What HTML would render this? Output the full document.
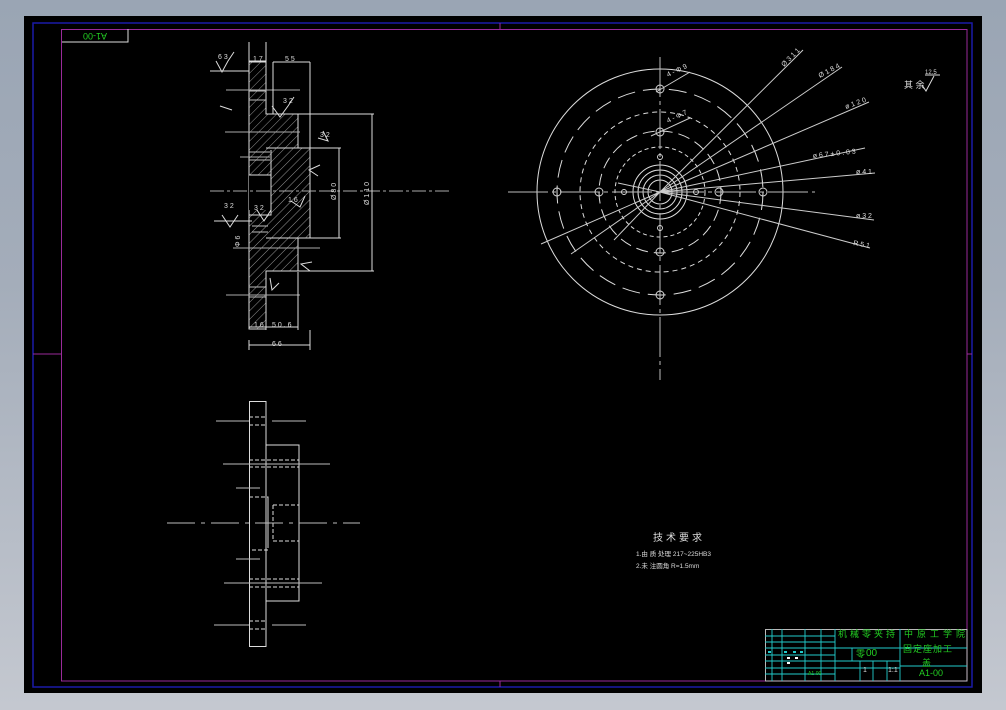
<!DOCTYPE html>
<html><head><meta charset="utf-8"><style>
html,body{margin:0;padding:0;width:1006px;height:710px;overflow:hidden;background:linear-gradient(#9aa5b4 0,#a4adba 40%,#c4c8d0 100%);}
svg{position:absolute;left:0;top:0}
text{font-family:"Liberation Sans","Noto Sans CJK SC",sans-serif}
</style></head><body>
<svg width="1006" height="710" viewBox="0 0 1006 710">
<defs>
<pattern id="h" width="6" height="6" patternUnits="userSpaceOnUse" patternTransform="rotate(45)">
<line x1="0" y1="0" x2="0" y2="6" stroke="#bbb" stroke-width="0.8"/></pattern>
</defs>
<rect x="24" y="16" width="958" height="677" fill="#000"/>
<rect x="33" y="23" width="939" height="664" fill="none" stroke="#1a1aa8" stroke-width="1.5"/>
<rect x="61.5" y="29.5" width="905.5" height="651.5" fill="none" stroke="#9a2a9a" stroke-width="1"/>
<line x1="33" y1="354" x2="61" y2="354" stroke="#9a2a9a"/><line x1="967" y1="354" x2="972" y2="354" stroke="#9a2a9a"/>
<line x1="500" y1="23" x2="500" y2="29" stroke="#9a2a9a"/><line x1="500" y1="681" x2="500" y2="687" stroke="#9a2a9a"/>
<polyline points="62,42 128,42 128,29" fill="none" stroke="#ddd"/>
<text x="95" y="39" font-size="9" fill="#2c2" text-anchor="middle" transform="rotate(180 95 36)">A1-00</text>

<!-- section view -->
<g stroke="#ddd" stroke-width="1" fill="none">
<path d="M249,61 H266 V114 H298 V148 H310 V238 H298 V271 H266 V329 H249 Z" fill="url(#h)"/>
<rect x="266" y="175" width="5" height="40" fill="#000" stroke="none"/>
<rect x="249" y="175" width="17" height="35" fill="#000" stroke="none"/>
<path d="M249,175 H271 V215 H249 M271,175 V150 M266,148 H298 M266,238 H298"/>
<path d="M249,160 H270 M249,152 H270 M252,226 H268 M252,232 H268 M249,91 H266 M249,100 H266 M249,287 H266 M249,297 H266" stroke="#bbb"/>
<path d="M210,191 H330 M320,191 H450" stroke="#aaa" stroke-dasharray="14,3,3,3"/>
<path d="M226,90 H300 M225,132 H300 M240,157 H270 M233,248 H320 M226,295 H300" stroke="#aaa"/>
<path d="M249,340 V350 M310,330 V350 M249,345 H310 M249,327 H298 M266,318 V330 M298,272 V330"/>
<path d="M249,61 V42 M266,61 V42 M249,62 H266 M273,62 H310 M310,62 V148 M273,62 V114"/>
<path d="M298,114 H374 M298,271 H374 M372,114 V271 M310,148 H341 M310,238 H341 M339,148 V238"/>
<path d="M210,71 H249 M214,221 H252 M222,215 L230,227 L238,215 M216,61 L222,72 L228,61 L234,52 M220,106 L232,110 M272,106 L280,117 L288,106 L294,97 M318,138 L328,141 L323,131 M320,165 L309,170 L318,176 M257,210 L264,221 L271,210 M291,201 L300,207 L305,196 M312,262 L301,264 L310,271 M270,278 L272,290 L279,283"/>
</g>
<g fill="#ddd" font-size="7" font-family="Liberation Mono,monospace">
<text x="253" y="61">1 7</text><text x="285" y="61">5 5</text>
<text x="218" y="59">6 3</text><text x="283" y="103">3 2</text><text x="320" y="137">3 2</text>
<text x="254" y="327">1 6</text><text x="272" y="327">5 0 . 6</text><text x="272" y="346">6 6</text>
<text x="224" y="208">3 2</text><text x="254" y="210">3 2</text><text x="288" y="202">1 6</text>
<text x="0" y="0" transform="translate(336,200) rotate(-90)">Ø 8 0</text>
<text x="0" y="0" transform="translate(369,205) rotate(-90)">Ø 1 1 0</text>
<text x="0" y="0" transform="translate(240,247) rotate(-90)">Φ 6</text>
</g>

<!-- lower view -->
<g stroke="#ddd" fill="none" stroke-width="1">
<rect x="249.5" y="401.5" width="16.5" height="245"/>
<path d="M266,445 H299 V601 H266"/>
<path d="M249,417 H266 M249,425 H266 M249,460 H299 M249,467 H299 M249,579 H299 M249,587 H299 M249,621 H266 M249,629 H266 M249,497 H268 V550 H249 M268,500 V545 M273,505 H299 M273,541 H299 M273,505 V541" stroke-dasharray="4,2"/>
<path d="M216,421 H249 M272,421 H306 M223,464 H330 M236,488 H260 M236,559 H260 M224,583 H322 M214,625 H249 M272,625 H306" stroke="#bbb"/>
<path d="M167,523 H360" stroke="#bbb" stroke-dasharray="28,6,4,6"/>
</g>

<!-- circular view -->
<g stroke="#ddd" fill="none" stroke-width="1">
<circle cx="660" cy="192" r="123"/>
<circle cx="660" cy="192" r="103" stroke-dasharray="18,8"/>
<circle cx="660" cy="192" r="80" stroke-dasharray="5,4"/>
<circle cx="660" cy="192" r="61" stroke-dasharray="12,6"/>
<circle cx="660" cy="192" r="45" stroke-dasharray="4,3"/>
<circle cx="660" cy="192" r="27"/><circle cx="660" cy="192" r="22"/><circle cx="660" cy="192" r="17"/><circle cx="660" cy="192" r="12"/>
<path d="M508,192 H815 M660,57 V380" stroke="#bbb" stroke-dasharray="40,4,4,4"/>
<g stroke-width="0.9">
<circle cx="557" cy="192" r="4"/><circle cx="763" cy="192" r="4"/><circle cx="660" cy="89" r="4"/><circle cx="660" cy="295" r="4"/>
<circle cx="599" cy="192" r="4"/><circle cx="719" cy="192" r="4"/><circle cx="660" cy="132" r="4"/><circle cx="660" cy="252" r="4"/>
<circle cx="624" cy="192" r="2.5"/><circle cx="696" cy="192" r="2.5"/><circle cx="660" cy="157" r="2.5"/><circle cx="660" cy="228" r="2.5"/>
</g>
<path d="M660,192 L803,50 M660,192 L842,67 M660,192 L869,102 M660,192 L865,148 M660,192 L875,173 M660,192 L874,220 M660,192 L870,248 M660,192 L541,244 M660,192 L571,254 M660,192 L614,240 M660,192 L618,183 M656,92 L690,72 M651,136 L690,118" stroke="#ccc"/>
</g>
<g fill="#ddd" font-size="7" font-family="Liberation Mono,monospace">
<text transform="translate(784,67) rotate(-45)">Ø 3 1 1</text>
<text transform="translate(820,78) rotate(-28)">Ø 1 8 4</text>
<text transform="translate(846,109) rotate(-20)">ø 1 2 0</text>
<text x="813" y="158" transform="rotate(-6 813 158)">ø 6 7 ± 0 . 0 3</text>
<text x="856" y="174">ø 4 1</text>
<text x="856" y="218">ø 3 2</text>
<text x="853" y="245" transform="rotate(10 853 245)">R 5 1</text>
<text x="668" y="77" transform="rotate(-25 668 77)">4 - Φ 9</text>
<text x="668" y="123" transform="rotate(-25 668 123)">4 - Φ 7</text>
</g>
<text x="904" y="88" font-size="9" fill="#ddd">其  余</text>
<path d="M922,85 L926,91 L934,76 M925,75 H940" stroke="#ddd" fill="none"/>
<text x="925" y="74" font-size="6" fill="#ddd">12.5</text>

<!-- tech requirements -->
<text x="653" y="541" font-size="10" fill="#ddd" letter-spacing="3">技术要求</text>
<text x="636" y="556" font-size="6.5" fill="#ddd">1.由 质 处理 217~225HB3</text>
<text x="636" y="568" font-size="6.5" fill="#ddd">2.未 注圆角 R=1.5mm</text>

<!-- title block -->
<g stroke="#2cc" stroke-width="0.9" fill="none">
<rect x="765.5" y="629.5" width="201.5" height="51.5" stroke="#ccc"/>
<path d="M765,636 H835 M765,642 H835 M765,648 H967 M765,655 H835 M765,661 H835 M765,668 H900 M765,674 H835"/>
<path d="M772,629 V681 M782,629 V681 M805,629 V681 M821,629 V681 M835,629 V681 M900,629 V681"/>
<path d="M852,648 V661 M835,661 H900 M860,661 V681 M873,661 V681 M887,661 V681 M900,666 H967"/>
</g>
<g fill="#2c2" font-size="9">
<text x="838" y="637" letter-spacing="3">机械零夹持</text>
<text x="904" y="637" letter-spacing="4">中原工学院</text>
<text x="856" y="657">零</text><text x="866" y="656" font-size="10">00</text>
<text x="903" y="652" letter-spacing="1">固定座加工</text>
<text x="922" y="666">盖</text>
<text x="919" y="676" font-size="9">A1-00</text>
<text x="863" y="672" font-size="7" fill="#ddd">1</text><text x="888" y="672" font-size="7" fill="#ddd">1:1</text>
<text x="808" y="675" font-size="5">A1-00</text>
</g>
<g fill="#2cc"><rect x="768" y="651" width="3" height="2"/><rect x="784" y="651" width="3" height="2"/><rect x="793" y="651" width="3" height="2"/><rect x="800" y="651" width="3" height="2"/>
<rect x="787" y="657" width="3" height="2" fill="#fff"/><rect x="795" y="657" width="3" height="2" fill="#fff"/><rect x="787" y="662" width="3" height="2" fill="#fff"/></g>
</svg>
</body></html>
